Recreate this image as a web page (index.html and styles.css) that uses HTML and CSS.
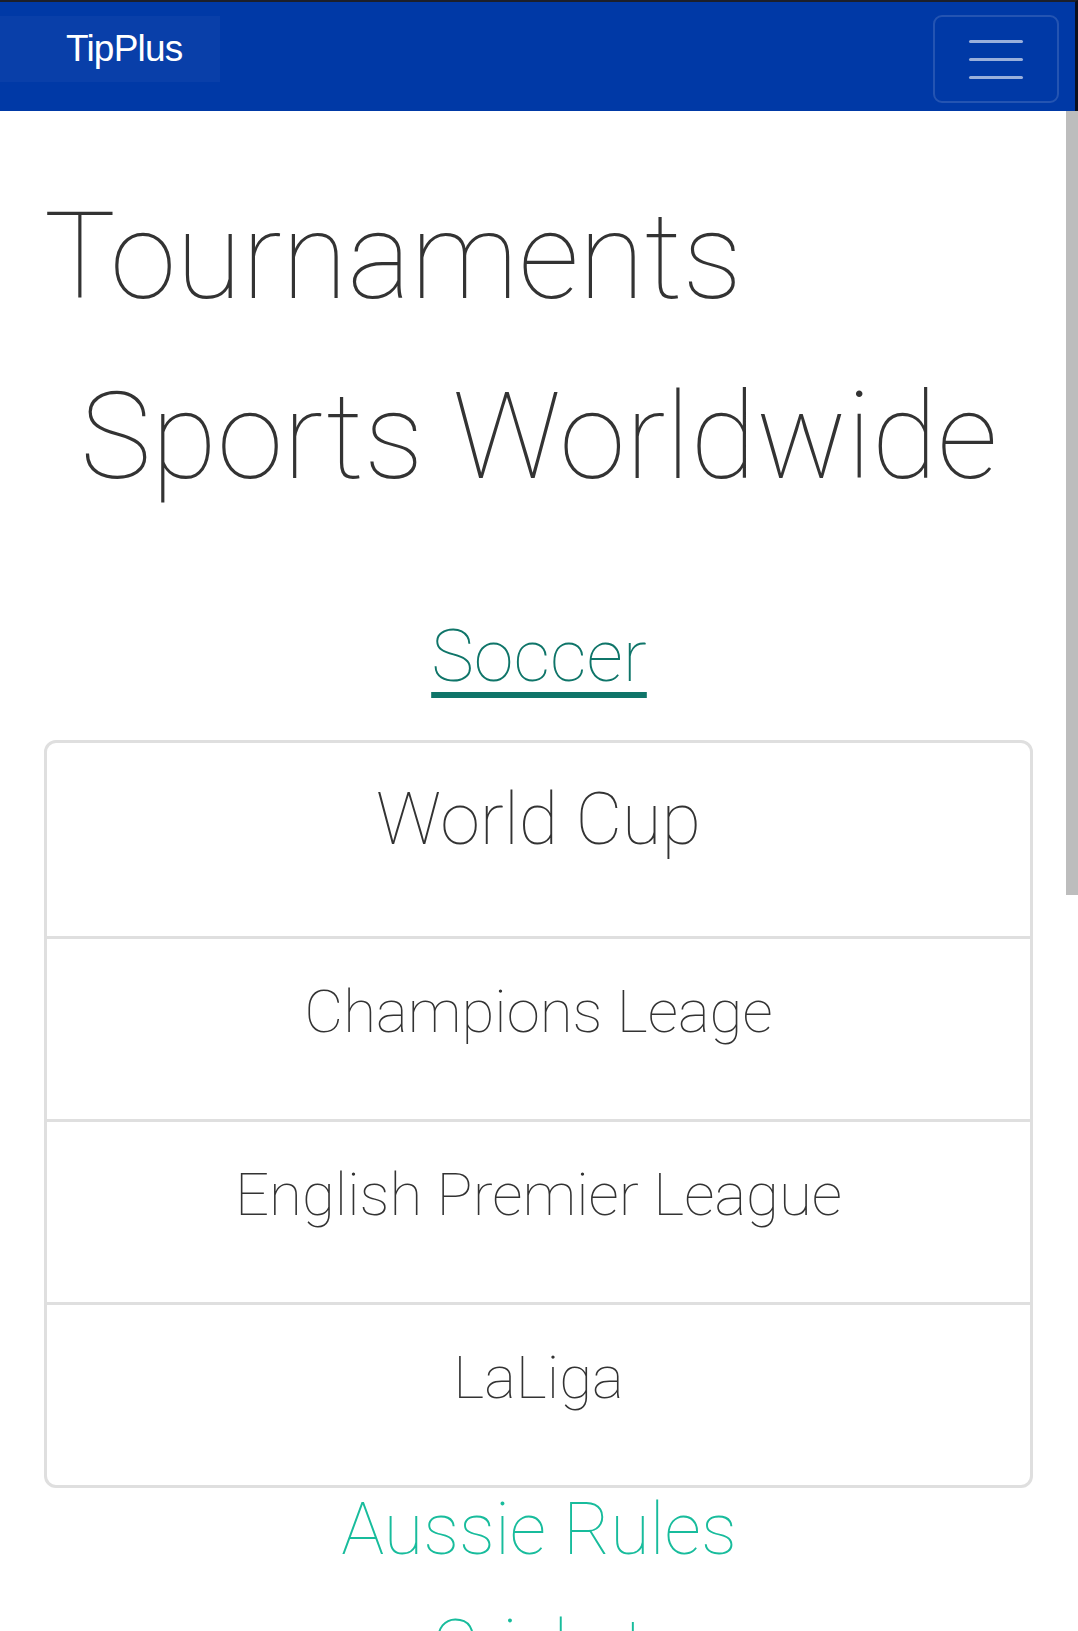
FILE: index.html
```html
<!DOCTYPE html>
<html lang="en">
<head>
<meta charset="utf-8">
<title>TipPlus - Tournaments</title>
<link rel="stylesheet" href="styles.css">
</head>
<body>
<header class="navbar">
  <a class="brand" href="#">TipPlus</a>
  <button class="toggler" type="button" aria-label="Toggle navigation">
    <span class="bar"></span>
    <span class="bar"></span>
    <span class="bar"></span>
  </button>
</header>
<main class="content">
  <h1 class="title">Tournaments</h1>
  <h1 class="subtitle">Sports Worldwide</h1>

  <div class="sport"><a class="sport-link active" href="#">Soccer</a></div>
  <ul class="list">
    <li class="item item-lg">World Cup</li>
    <li class="item">Champions Leage</li>
    <li class="item">English Premier League</li>
    <li class="item">LaLiga</li>
  </ul>

  <div class="sport"><a class="sport-link" href="#">Aussie Rules</a></div>
  <div class="sport"><a class="sport-link" href="#">Cricket</a></div>
  <div class="sport"><a class="sport-link" href="#">Basketball</a></div>
</main>
<div class="scrollbar"></div>
</body>
</html>
```

FILE: styles.css
```css
* { box-sizing: border-box; }

html, body {
  margin: 0;
  padding: 0;
  background: #ffffff;
}

body {
  font-family: Roboto, "Noto Sans", sans-serif;
  font-weight: 100;
  color: #333333;
  overflow: hidden;
}

.navbar {
  height: 111px;
  background: #0039a6;
  border-top: 2px solid #1c1f2a;
  border-right: 3px solid #0b0f1e;
  display: flex;
  justify-content: space-between;
  align-items: flex-start;
}

.brand {
  margin-top: 14px;
  width: 220px;
  height: 66px;
  padding-left: 66px;
  display: flex;
  align-items: center;
  background: rgba(255, 255, 255, 0.035);
  color: #ffffff;
  text-decoration: none;
  font-family: "Liberation Sans", Arial, sans-serif;
  font-weight: 400;
  font-size: 37px;
  letter-spacing: -0.8px;
}

.toggler {
  margin-top: 13px;
  margin-right: 16px;
  width: 126px;
  height: 88px;
  border: 2px solid rgba(255, 255, 255, 0.14);
  border-radius: 9px;
  background: transparent;
  display: flex;
  flex-direction: column;
  align-items: center;
  justify-content: center;
  gap: 15px;
  padding: 0;
}

.bar {
  display: block;
  width: 54px;
  height: 3px;
  border-radius: 2px;
  background: rgba(255, 255, 255, 0.6);
}

.content {
  padding: 0;
}

.title {
  margin: 74px 0 0 0;
  padding-left: 44px;
  font-size: 120px;
  font-weight: 100;
  line-height: 1.2;
  color: #333333;
}

.subtitle {
  margin: 36px 0 0 0;
  text-align: center;
  font-size: 120px;
  font-weight: 100;
  line-height: 1.2;
  color: #333333;
}

.sport {
  text-align: center;
  margin-bottom: 32px;
}

.subtitle + .sport {
  margin-top: 105px;
  margin-bottom: 40px;
}

.sport-link {
  font-size: 72px;
  line-height: 1.2;
  color: #18bc9c;
  text-decoration: none;
  font-weight: 100;
}

.sport-link.active {
  font-size: 72px;
  color: #0f7569;
  text-decoration: underline;
  text-decoration-thickness: 6px;
  text-underline-offset: 11px;
}

.list {
  list-style: none;
  margin: 0 45px 0 44px;
  padding: 0;
  border: 3px solid #dfdfdf;
  border-radius: 12px;
}

.item {
  text-align: center;
  font-size: 60px;
  line-height: 1.2;
  padding: 37px 16px 71px;
  border-top: 3px solid #dfdfdf;
  color: #333333;
}

.item:first-child {
  border-top: none;
}

.item-lg {
  font-size: 72px;
  padding-top: 34px;
  padding-bottom: 72px;
}

.list + .sport .sport-link {
  line-height: 1.17;
}

.scrollbar {
  position: fixed;
  top: 111px;
  right: 0;
  width: 12px;
  height: 784px;
  background: #bdbdbd;
}
```
